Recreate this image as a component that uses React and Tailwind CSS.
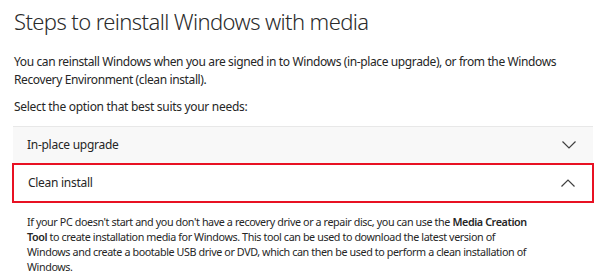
import React from "react";

const Chevron = ({ up }) => (
  <svg width="16" height="10" viewBox="0 0 16 10" fill="none" className="shrink-0">
    <path
      d={up ? "M1.5 8.5 L8 2 L14.5 8.5" : "M1.5 1.5 L8 8 L14.5 1.5"}
      stroke="#404040"
      strokeWidth="1.2"
    />
  </svg>
);

const App = () => {
  return (
    <div
      className="w-[600px] h-[274px] overflow-hidden bg-white text-[#262626]"
      style={{ fontFamily: '"Noto Sans", "Open Sans", sans-serif' }}
    >
      <div className="pl-[14px] pr-[6px] pt-[6px]">
        {/* Title */}
        <h1 className="text-[22px] leading-[30px] font-light text-[#2b2b2b] tracking-[-0.6px]">
          Steps to reinstall Windows with media
        </h1>

        <p className="mt-[17px] text-[12px] leading-[18px] tracking-[-0.38px] whitespace-nowrap">
          You can reinstall Windows when you are signed in to Windows (in-place upgrade), or from the Windows
          <br />
          Recovery Environment (clean install).
        </p>

        <p className="mt-[9px] text-[12px] leading-[18px] tracking-[-0.3px]">
          Select the option that best suits your needs:
        </p>

        {/* Accordion */}
        <div className="mt-[10px] -ml-[1px] w-[580px]">
          <div className="flex items-center justify-between h-[37px] bg-[#f8f8f8] border-t border-[#e8e8e8] pl-[14px] pr-[16px]">
            <span className="text-[12px] tracking-[-0.28px]">In-place upgrade</span>
            <Chevron />
          </div>
          <div className="flex items-center justify-between h-[40px] border-2 border-[#e81123] -mx-[1px] pl-[14px] pr-[16px]">
            <span className="text-[12px] tracking-[-0.28px]">Clean install</span>
            <Chevron up />
          </div>
          <p className="mt-[12px] pl-[14px] text-[10.75px] leading-[15px] tracking-[-0.4px] whitespace-nowrap">
            If your PC doesn't start and you don't have a recovery drive or a repair disc, you can use the{" "}
            <b className="font-semibold">Media Creation</b>
            <br />
            <b className="font-semibold">Tool</b> to create installation media for Windows. This tool can be used to
            download the latest version of
            <br />
            Windows and create a bootable USB drive or DVD, which can then be used to perform a clean installation of
            <br />
            Windows.
          </p>
        </div>
      </div>
    </div>
  );
};

export default App;
